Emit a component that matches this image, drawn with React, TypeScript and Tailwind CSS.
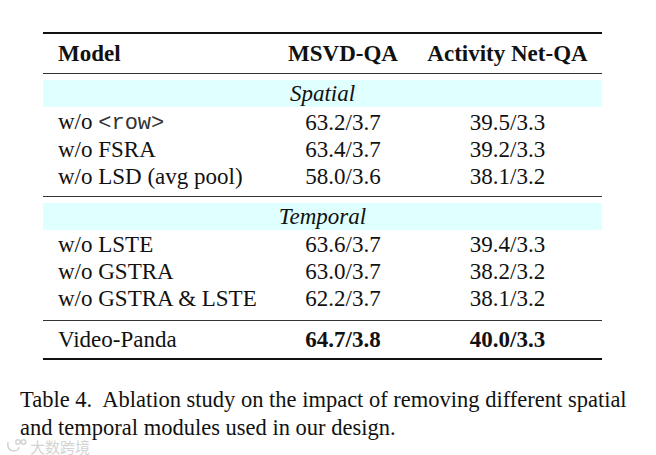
import React from "react"

type Row = { model: React.ReactNode; a: string; b: string }

const spatial: Row[] = [
  {
    model: (
      <>
        w/o{" "}
        <span className="[font-family:'Liberation_Mono',monospace] text-[22px] text-[#333]">
          &lt;row&gt;
        </span>
      </>
    ),
    a: "63.2/3.7",
    b: "39.5/3.3",
  },
  { model: "w/o FSRA", a: "63.4/3.7", b: "39.2/3.3" },
  { model: "w/o LSD (avg pool)", a: "58.0/3.6", b: "38.1/3.2" },
]

const temporal: Row[] = [
  { model: "w/o LSTE", a: "63.6/3.7", b: "39.4/3.3" },
  { model: "w/o GSTRA", a: "63.0/3.7", b: "38.2/3.2" },
  { model: "w/o GSTRA & LSTE", a: "62.2/3.7", b: "38.1/3.2" },
]

function DataRow({ row }: { row: Row }) {
  return (
    <div className="grid grid-cols-[230px_140px_189px] h-[27px] items-center">
      <div className="pl-[15px]">{row.model}</div>
      <div className="text-center">{row.a}</div>
      <div className="text-center">{row.b}</div>
    </div>
  )
}

function Band({ label }: { label: string }) {
  return (
    <div className="mt-[6px] h-[27px] bg-[#e0ffff] flex items-center justify-center italic">
      {label}
    </div>
  )
}

export default function App() {
  return (
    <div className="w-[656px] h-[455px] bg-white text-[#111] relative overflow-hidden [font-family:'Liberation_Serif',serif]">
      <div className="pt-[32px] pl-[43px]">
        <div className="w-[559px] text-[23px] leading-none">
          <div className="border-t-2 border-[#111]" />
          <div className="grid grid-cols-[230px_140px_189px] h-[39px] items-center font-bold">
            <div className="pl-[15px]">Model</div>
            <div className="text-center">MSVD-QA</div>
            <div className="text-center">Activity Net-QA</div>
          </div>
          <div className="border-t border-[#333]" />

          <Band label="Spatial" />
          <div className="pt-[2px]">
            {spatial.map((r, i) => (
              <DataRow key={i} row={r} />
            ))}
          </div>
          <div className="mt-[6px] border-t border-[#333]" />

          <Band label="Temporal" />
          <div className="pt-[1px]">
            {temporal.map((r, i) => (
              <DataRow key={i} row={r} />
            ))}
          </div>
          <div className="mt-[8px] border-t border-[#333]" />

          <div className="grid grid-cols-[230px_140px_189px] h-[37px] items-center">
            <div className="pl-[15px]">Video-Panda</div>
            <div className="text-center font-bold">64.7/3.8</div>
            <div className="text-center font-bold">40.0/3.3</div>
          </div>
          <div className="border-t-2 border-[#111]" />
        </div>
      </div>

      <div className="pl-[20px] pt-[26px] w-[645px] text-[22.5px] leading-[28px]">
        Table 4.&nbsp; Ablation study on the impact of removing different spatial and temporal modules used in our design.
      </div>

      <div className="absolute left-[5px] top-[438px] flex items-center gap-[3px] text-[#d4d4d4] text-[15px] leading-none [font-family:'Noto_Sans_CJK_SC',sans-serif]">
        <svg width="22" height="16" viewBox="0 0 22 16" fill="none" stroke="#d4d4d4" strokeWidth="1.6">
          <path d="M3 4 C2 9 4 13 9 13 C12 13 14 11 14 9" />
          <circle cx="13" cy="4" r="2.2" />
          <circle cx="18.5" cy="4" r="2.2" />
        </svg>
        <span>大数跨境</span>
      </div>
    </div>
  )
}
